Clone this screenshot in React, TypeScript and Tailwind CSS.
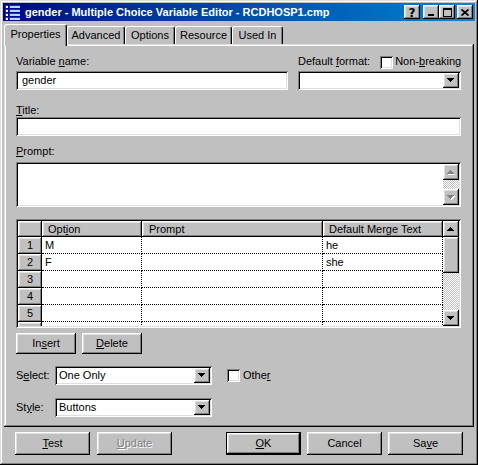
import React from "react";

const RAISED =
  "shadow-[inset_-1px_-1px_#000000,inset_1px_1px_#ffffff,inset_-2px_-2px_#808080,inset_2px_2px_#dfdfdf]";
const SUNKEN =
  "shadow-[inset_1px_1px_#808080,inset_-1px_-1px_#ffffff,inset_2px_2px_#000000,inset_-2px_-2px_#dfdfdf]";
const FRAME =
  "shadow-[inset_-1px_-1px_#000000,inset_1px_1px_#dfdfdf,inset_-2px_-2px_#808080,inset_2px_2px_#ffffff]";
const CHECKER =
  "bg-[repeating-conic-gradient(#c0c0c0_0%_25%,#ffffff_0%_50%)] bg-[length:2px_2px]";

function Tri({ dir, disabled }: { dir: "up" | "down"; disabled?: boolean }) {
  const rows = [7, 5, 3, 1];
  const order = dir === "down" ? rows : [...rows].reverse();
  const rects = (color: string, dx: number, dy: number) =>
    order.map((w, i) => (
      <rect key={color + i} x={(7 - w) / 2 + dx} y={i + dy} width={w} height={1} fill={color} />
    ));
  return (
    <svg width={8} height={5} shapeRendering="crispEdges">
      {disabled && rects("#ffffff", 1, 1)}
      {rects(disabled ? "#808080" : "#000000", 0, 0)}
    </svg>
  );
}

function ScrollBtn({ dir, disabled, h = 16 }: { dir: "up" | "down"; disabled?: boolean; h?: number }) {
  return (
    <div
      className={`w-[16px] ${h === 16 ? "h-[16px]" : "h-[15px]"} bg-[#c0c0c0] ${RAISED} flex items-center justify-center shrink-0`}
    >
      <Tri dir={dir} disabled={disabled} />
    </div>
  );
}

function Combo({ value, className }: { value?: string; className: string }) {
  return (
    <div className={`h-[19px] bg-white ${SUNKEN} p-[2px] flex ${className}`}>
      <div className="flex-1 pl-[2px] leading-[15px] overflow-hidden whitespace-nowrap">{value}</div>
      <ScrollBtn dir="down" h={15} />
    </div>
  );
}

function Checkbox({ className = "" }: { className?: string }) {
  return <div className={`w-[13px] h-[13px] bg-white ${SUNKEN} shrink-0 ${className}`} />;
}

function WinBtn({ children, className = "", def, disabled }: { children: React.ReactNode; className?: string; def?: boolean; disabled?: boolean }) {
  if (def) {
    return (
      <div className={`border border-black bg-[#c0c0c0] ${className}`}>
        <div className={`w-full h-full ${RAISED} flex items-center justify-center`}>{children}</div>
      </div>
    );
  }
  return (
    <div
      className={`bg-[#c0c0c0] ${RAISED} flex items-center justify-center ${disabled ? "text-[#808080] [text-shadow:1px_1px_0_#ffffff]" : ""} ${className}`}
    >
      {children}
    </div>
  );
}

function TitleIcon() {
  return (
    <svg width={16} height={16} viewBox="0 0 16 16" shapeRendering="crispEdges">
      {[1, 5, 9, 13].map((y) => (
        <g key={y}>
          <rect x={0} y={y} width={3} height={3} fill="#ffffff" stroke="#0000a0" strokeWidth={0.8} />
          <rect x={4} y={y} width={11} height={3} fill="#a8dcff" stroke="#0000a0" strokeWidth={0.8} />
        </g>
      ))}
    </svg>
  );
}

function CapBtn({ children, className = "" }: { children: React.ReactNode; className?: string }) {
  return (
    <div className={`w-[16px] h-[14px] bg-[#c0c0c0] ${RAISED} flex items-center justify-center ${className}`}>{children}</div>
  );
}

function TitleBar() {
  return (
    <div className="h-[18px] bg-linear-to-r from-[#000080] to-[#1084d0] flex items-center pl-[2px] pr-[2px] shrink-0">
      <TitleIcon />
      <div className="ml-[4px] text-white font-bold text-[11px] leading-[18px] whitespace-nowrap">
        gender - Multiple Choice Variable Editor - RCDHOSP1.cmp
      </div>
      <div className="flex-1" />
      <CapBtn>
        <span className="font-bold text-[12px] leading-[12px] mt-[1px] font-['DejaVu_Sans',sans-serif]">?</span>
      </CapBtn>
      <CapBtn className="ml-[3px]">
        <svg width={8} height={8} shapeRendering="crispEdges">
          <rect x={1} y={6} width={6} height={2} fill="#000" />
        </svg>
      </CapBtn>
      <CapBtn>
        <svg width={9} height={9} shapeRendering="crispEdges">
          <rect x={0.5} y={0.5} width={8} height={8} fill="none" stroke="#000" strokeWidth={1} />
          <rect x={0} y={1} width={9} height={1} fill="#000" />
        </svg>
      </CapBtn>
      <CapBtn className="ml-[2px]">
        <svg width={8} height={7} viewBox="0 0 8 7">
          <path d="M0.5 0.5 L7.5 6.5 M7.5 0.5 L0.5 6.5" stroke="#000" strokeWidth={1.8} />
        </svg>
      </CapBtn>
    </div>
  );
}

function Tab({ label, w, selected }: { label: React.ReactNode; w: string; selected?: boolean }) {
  return (
    <div
      className={`${w} ${selected ? "h-[22px] -mb-[2px] relative z-10 pb-[3px]" : "h-[18px]"} bg-[#c0c0c0] border-t border-l border-white border-r border-r-black rounded-t-[3px] shadow-[inset_-1px_0_#808080] flex items-center justify-center whitespace-nowrap`}
    >
      {label}
    </div>
  );
}

function Tabs() {
  return (
    <div className="h-[23px] flex items-end pl-[1px] shrink-0">
      <Tab label="Properties" w="w-[63px]" selected />
      <Tab label="Advanced" w="w-[58px]" />
      <Tab label="Options" w="w-[50px]" />
      <Tab label="Resource" w="w-[57px]" />
      <Tab label="Used In" w="w-[51px]" />
    </div>
  );
}

const cellBase = "border-r border-b border-dotted border-black pl-[3px] leading-[16px] whitespace-nowrap overflow-hidden";

function GridRow({ n, a, c }: { n: number; a?: string; c?: string }) {
  return (
    <div className="flex h-[17px] shrink-0">
      <div className={`w-[24px] bg-[#c0c0c0] ${RAISED} flex items-center justify-center`}>{n}</div>
      <div className={`w-[100px] ${cellBase}`}>{a}</div>
      <div className={`w-[181px] ${cellBase}`}></div>
      <div className={`w-[120px] ${cellBase}`}>{c}</div>
    </div>
  );
}

function Grid() {
  return (
    <div className={`mt-[12px] h-[109px] w-[445px] bg-white ${SUNKEN} p-[2px] flex`}>
      <div className="w-[425px] flex flex-col overflow-hidden">
        <div className="flex h-[16px] shrink-0">
          <div className={`w-[24px] bg-[#c0c0c0] ${RAISED}`} />
          <div className={`w-[100px] bg-[#c0c0c0] ${RAISED} pl-[6px] leading-[16px]`}>
            Opt<u>i</u>on
          </div>
          <div className={`w-[181px] bg-[#c0c0c0] ${RAISED} pl-[7px] leading-[16px]`}>Prompt</div>
          <div className={`w-[120px] bg-[#c0c0c0] ${RAISED} pl-[6px] leading-[16px] whitespace-nowrap`}>
            Default Mer<u>g</u>e Text
          </div>
        </div>
        <div className="flex-1 overflow-hidden flex flex-col">
          <GridRow n={1} a="M" c="he" />
          <GridRow n={2} a="F" c="she" />
          <GridRow n={3} />
          <GridRow n={4} />
          <GridRow n={5} />
          <GridRow n={6} />
        </div>
      </div>
      <div className="w-[16px] flex flex-col">
        <ScrollBtn dir="up" />
        <div className={`h-[36px] bg-[#c0c0c0] ${RAISED} shrink-0`} />
        <div className={`flex-1 ${CHECKER}`} />
        <ScrollBtn dir="down" />
      </div>
    </div>
  );
}

function Panel() {
  return (
    <div className={`mx-[1px] h-[383px] bg-[#c0c0c0] ${FRAME} pl-[12px] pt-[11px] flex flex-col shrink-0`}>
      <div className="flex">
        <div className="w-[272px] flex flex-col">
          <div className="h-[16px]">
            Variable <u>n</u>ame:
          </div>
          <div className={`h-[19px] bg-white ${SUNKEN} pl-[6px] leading-[19px]`}>gender</div>
        </div>
        <div className="ml-[10px] w-[163px] flex flex-col">
          <div className="h-[16px] flex items-start whitespace-nowrap">
            <span>
              Default <u>f</u>ormat:
            </span>
            <Checkbox className="ml-[10px] mt-[1px]" />
            <span className="ml-[2px]">
              Non-<u>b</u>reaking
            </span>
          </div>
          <Combo className="w-[163px]" />
        </div>
      </div>

      <div className="mt-[14px] h-[13px]">
        <u>T</u>itle:
      </div>
      <div className={`h-[19px] w-[445px] bg-white ${SUNKEN}`} />

      <div className="mt-[9px] h-[17px]">
        <u>P</u>rompt:
      </div>
      <div className={`h-[45px] w-[445px] bg-white ${SUNKEN} p-[2px] flex justify-end`}>
        <div className="w-[16px] flex flex-col">
          <ScrollBtn dir="up" disabled />
          <div className={`flex-1 ${CHECKER}`} />
          <ScrollBtn dir="down" disabled />
        </div>
      </div>

      <Grid />

      <div className="mt-[5px] flex">
        <WinBtn className="w-[60px] h-[21px]">
          <span>
            In<u>s</u>ert
          </span>
        </WinBtn>
        <WinBtn className="ml-[6px] w-[60px] h-[21px]">
          <span>
            <u>D</u>elete
          </span>
        </WinBtn>
      </div>

      <div className="mt-[12px] flex items-center h-[19px]">
        <div className="w-[39px]">
          S<u>e</u>lect:
        </div>
        <Combo value="One Only" className="w-[157px]" />
        <Checkbox className="ml-[15px]" />
        <span className="ml-[3px]">
          Othe<u>r</u>
        </span>
      </div>

      <div className="mt-[13px] flex items-center h-[19px]">
        <div className="w-[39px]">
          St<u>y</u>le:
        </div>
        <Combo value="Buttons" className="w-[157px]" />
      </div>
    </div>
  );
}

function BottomButtons() {
  return (
    <div className="mt-[5px] h-[23px] flex pl-[12px] shrink-0">
      <WinBtn className="w-[75px] h-[23px]">
        <span>
          <u>T</u>est
        </span>
      </WinBtn>
      <WinBtn className="ml-[7px] w-[75px] h-[23px]" disabled>
        <span>
          <u>U</u>pdate
        </span>
      </WinBtn>
      <WinBtn className="ml-[54px] w-[75px] h-[23px]" def>
        <span>
          <u>O</u>K
        </span>
      </WinBtn>
      <WinBtn className="ml-[6px] w-[75px] h-[23px]">
        <span>Cancel</span>
      </WinBtn>
      <WinBtn className="ml-[6px] w-[75px] h-[23px]">
        <span>
          Sa<u>v</u>e
        </span>
      </WinBtn>
    </div>
  );
}

export default function App() {
  return (
    <div
      className={`w-[478px] h-[465px] bg-[#c0c0c0] p-[3px] flex flex-col text-[11px] leading-[13px] text-black font-['Liberation_Sans',Arial,sans-serif] ${FRAME} select-none overflow-hidden`}
    >
      <TitleBar />
      <Tabs />
      <Panel />
      <BottomButtons />
    </div>
  );
}
